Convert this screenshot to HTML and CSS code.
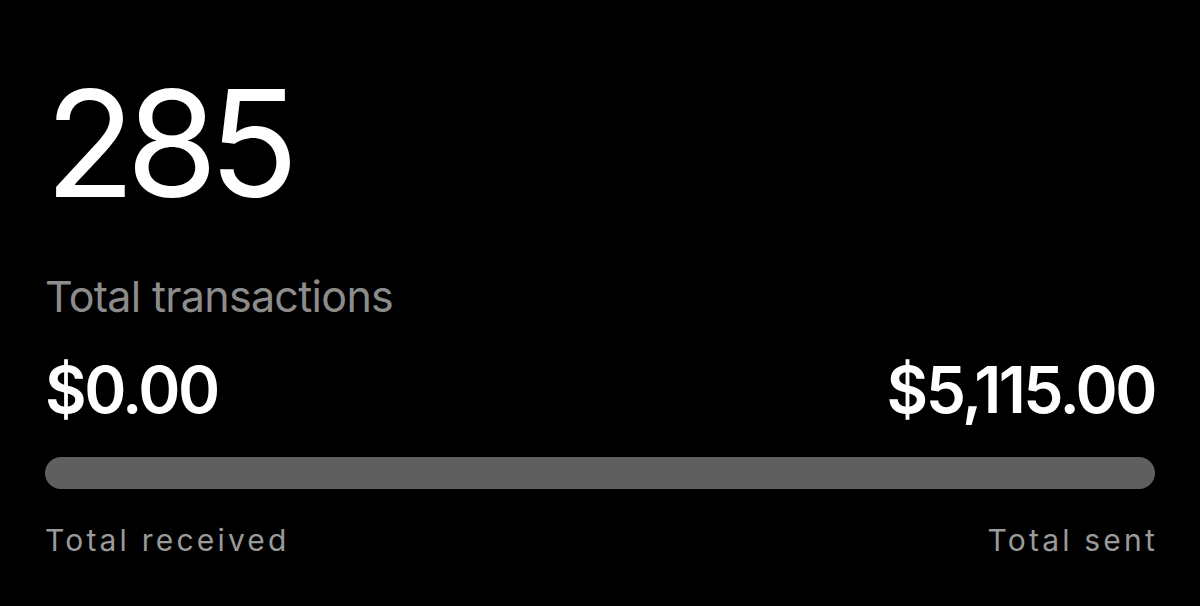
FILE: index.html
```html
<!DOCTYPE html>
<html lang="en">
<head>
<meta charset="utf-8">
<title>Transactions</title>
<link rel="stylesheet" href="styles.css">
</head>
<body>
  <main class="summary">
    <div class="count">285</div>
    <div class="count-label">Total transactions</div>
    <div class="amounts">
      <span class="amount">$0.00</span>
      <span class="amount">$5,115.00</span>
    </div>
    <div class="bar"></div>
    <div class="legend">
      <span>Total received</span>
      <span class="legend-end">Total sent</span>
    </div>
  </main>
</body>
</html>
```
FILE: styles.css
```css
html, body {
  margin: 0;
  padding: 0;
  background: #000;
  height: 100%;
}

body {
  font-family: Inter, "Noto Sans", sans-serif;
  color: #fff;
}

.summary {
  display: flex;
  flex-direction: column;
  padding: 0 45px;
}

.count {
  font-size: 148px;
  font-weight: 400;
  letter-spacing: -9px;
  line-height: 1;
  margin-top: 70px;
}

.count-label {
  font-size: 43px;
  color: #8c8c8c;
  letter-spacing: -0.7px;
  margin-top: 57px;
  line-height: 1;
}

.amounts {
  display: flex;
  justify-content: space-between;
  margin-top: 40px;
}

.amount {
  font-size: 64px;
  font-weight: 600;
  letter-spacing: -2.5px;
  line-height: 1;
}

.bar {
  height: 32px;
  border-radius: 16px;
  background: #5f5f5f;
  margin-top: 35px;
}

.legend {
  display: flex;
  justify-content: space-between;
  margin-top: 36px;
  font-size: 30px;
  letter-spacing: 3.2px;
  color: #9a9a9a;
  line-height: 1;
}

.legend-end {
  margin-right: -3px;
}
```
